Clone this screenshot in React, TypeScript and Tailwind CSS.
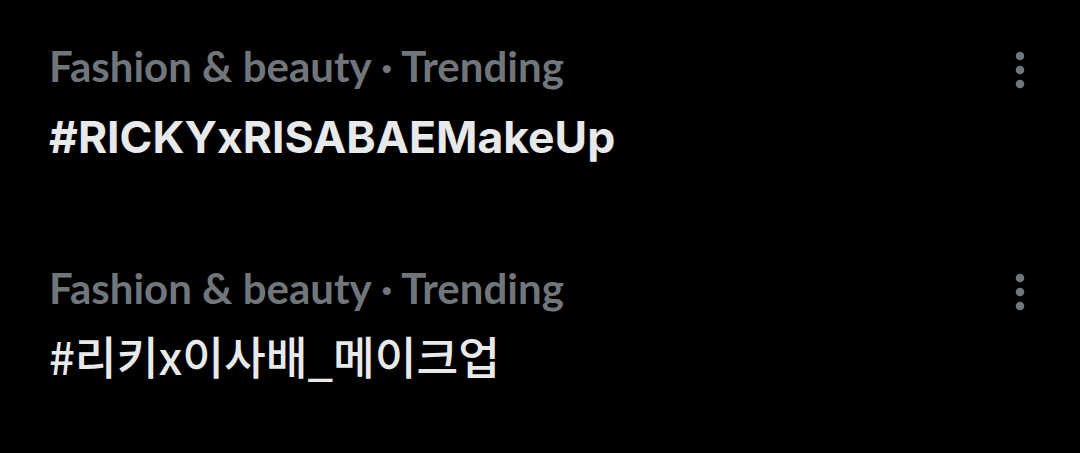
const trends = [
  { category: 'Fashion & beauty · Trending', tag: '#RICKYxRISABAEMakeUp', korean: false },
  { category: 'Fashion & beauty · Trending', tag: '#리키x이사배_메이크업', korean: true },
];

const MoreIcon = () => (
  <svg width="10" height="38" viewBox="0 0 10 38" fill="#71767b">
    <circle cx="5" cy="5" r="4.3" />
    <circle cx="5" cy="19" r="4.3" />
    <circle cx="5" cy="33" r="4.3" />
  </svg>
);

const App = () => {
  return (
    <main className="flex h-[453px] w-[1080px] flex-col bg-black">
      {trends.map((trend, i) => (
        <div key={i} className="flex h-[222px] flex-row items-start justify-between pl-[49px] pr-[55px] pt-[42px]">
          <div className="flex flex-col">
            <span className="text-[42px] leading-[48px] font-bold text-[#71767b] [font-family:Lato,sans-serif]">
              {trend.category}
            </span>
            {trend.korean ? (
              <span className="mt-[17px] text-[45.4px] leading-[52px] font-medium text-[#e7e9ea] [font-family:'Noto_Sans_CJK_KR',sans-serif]">
                {trend.tag}
              </span>
            ) : (
              <span className="mt-[21px] text-[44.5px] leading-[52px] font-bold text-[#e7e9ea] [font-family:Inter,sans-serif]">
                {trend.tag}
              </span>
            )}
          </div>
          <div className="mt-[9px]">
            <MoreIcon />
          </div>
        </div>
      ))}
    </main>
  );
};

export default App;
